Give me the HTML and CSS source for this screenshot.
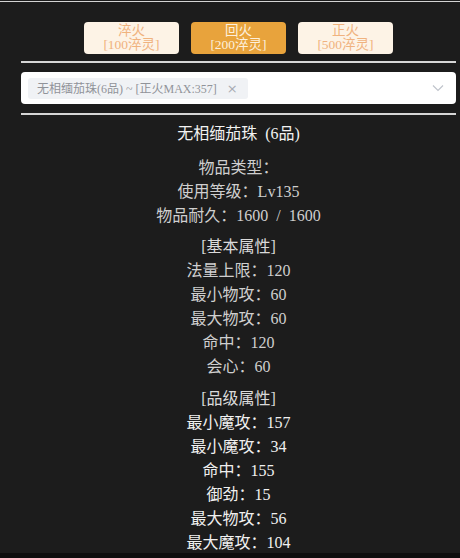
FILE: index.html
```html
<!DOCTYPE html>
<html lang="zh">
<head>
<meta charset="utf-8">
<link rel="stylesheet" href="styles.css">
</head>
<body>
<div class="page">
  <div class="topline"></div>
  <div class="content">
    <div class="btns">
      <div class="btn">淬火<br>[100淬灵]</div>
      <div class="btn active">回火<br>[200淬灵]</div>
      <div class="btn">正火<br>[500淬灵]</div>
    </div>
    <div class="rule"></div>
    <div class="select">
      <span class="tag">无相缅茄珠(6品) ~ [正火MAX:357]<span class="close">×</span></span>
      <svg class="chev" width="12" height="8" viewBox="0 0 12 8"><path d="M1 1.5 L6 6.5 L11 1.5" fill="none" stroke="#c0c4cc" stroke-width="1.2"/></svg>
    </div>
    <div class="rule"></div>
    <div class="title">无相缅茄珠 (6品)</div>
    <div class="info">
      <div class="line">物品类型：</div>
      <div class="line">使用等级：Lv135</div>
      <div class="line">物品耐久：1600 / 1600</div>
    </div>
    <div class="sect basic">
      <div class="head">[基本属性]</div>
      <div class="line">法量上限：120</div>
      <div class="line">最小物攻：60</div>
      <div class="line">最大物攻：60</div>
      <div class="line">命中：120</div>
      <div class="line">会心：60</div>
    </div>
    <div class="sect quality">
      <div class="head">[品级属性]</div>
      <div class="line">最小魔攻：157</div>
      <div class="line">最小魔攻：34</div>
      <div class="line">命中：155</div>
      <div class="line">御劲：15</div>
      <div class="line">最大物攻：56</div>
      <div class="line">最大魔攻：104</div>
    </div>
  </div>
</div>
</body>
</html>
```

FILE: styles.css
```css
html, body {
  margin: 0;
  padding: 0;
  background: #0e0e0e;
}
body {
  font-family: "Liberation Serif", "Noto Sans CJK SC", serif;
}
.page {
  height: 553px;
  overflow: hidden;
  background: #1c1c1c;
  padding-top: 1px;
  box-sizing: border-box;
}
.topline {
  height: 1px;
  background: #d4d4d4;
}
.content {
  padding: 0 4px 0 21px;
}
.btns {
  display: flex;
  justify-content: center;
  gap: 12px;
  margin-top: 20px;
}
.btn {
  width: 95px;
  height: 32px;
  box-sizing: border-box;
  border-radius: 4px;
  background: #fdf3e6;
  color: #f0b27e;
  font-size: 13.5px;
  line-height: 14px;
  display: flex;
  flex-direction: column;
  justify-content: center;
  align-items: center;
  text-align: center;
}
.btn.active {
  background: #e8a33c;
  color: #fdf0dc;
}
.rule {
  height: 2px;
  background: #d6d6d6;
  margin-top: 7px;
}
.select {
  margin-top: 9px;
  height: 32px;
  background: #fff;
  border-radius: 4px;
  display: flex;
  align-items: center;
  justify-content: space-between;
  padding: 0 12px 0 7px;
  box-sizing: border-box;
}
.select + .rule {
  margin-top: 9px;
}
.tag {
  height: 21px;
  display: inline-flex;
  align-items: center;
  background: #f0f2f5;
  color: #909399;
  border-radius: 3px;
  padding: 0 10px 0 9px;
  font-size: 12px;
  white-space: pre;
}
.close {
  margin-left: 10px;
  font-family: "DejaVu Sans", sans-serif;
  font-size: 13px;
  color: #a8abb2;
}
.chev {
  display: block;
}
.title {
  margin-top: 7px;
  text-align: center;
  font-size: 16px;
  line-height: 24px;
  color: #f2f2f2;
  word-spacing: 0.25em;
}
.info {
  margin-top: 10px;
}
.line, .head {
  text-align: center;
  font-size: 16px;
  line-height: 24px;
  white-space: pre;
  word-spacing: 0.25em;
}
.info .line, .basic .line {
  color: #cfcfcf;
}
.sect {
  margin-top: 7px;
}
.sect.quality {
  margin-top: 8px;
}
.head {
  color: #dadada;
}
.quality .line {
  color: #f0f0f0;
}
```
